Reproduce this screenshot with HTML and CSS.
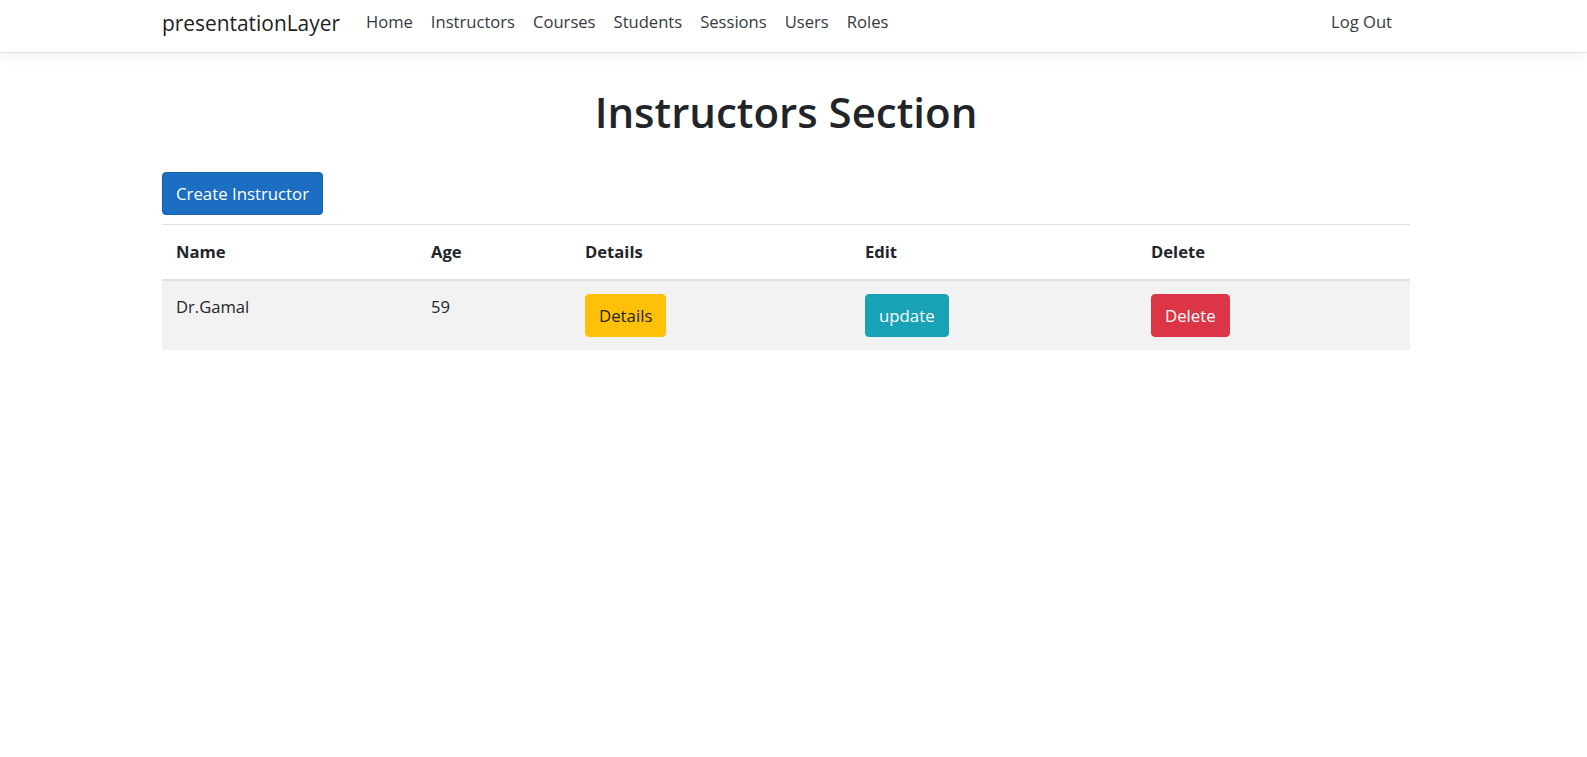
FILE: index.html
```html
<!DOCTYPE html>
<html lang="en">
<head>
<meta charset="utf-8">
<title>Instructors - presentationLayer</title>
<link rel="stylesheet" href="styles.css">
</head>
<body>
<header class="navbar">
  <div class="page">
    <div class="nav-container">
      <a class="brand" href="#">presentationLayer</a>
      <ul class="nav-links">
        <li><a class="nav-link" href="#">Home</a></li>
        <li><a class="nav-link" href="#">Instructors</a></li>
        <li><a class="nav-link" href="#">Courses</a></li>
        <li><a class="nav-link" href="#">Students</a></li>
        <li><a class="nav-link" href="#">Sessions</a></li>
        <li><a class="nav-link" href="#">Users</a></li>
        <li><a class="nav-link" href="#">Roles</a></li>
      </ul>
      <ul class="nav-links nav-right">
        <li><a class="nav-link" href="#">Log Out</a></li>
      </ul>
    </div>
  </div>
</header>
<main class="page">
  <div class="container">
    <h1 class="title">Instructors Section</h1>
    <a class="btn btn-primary" href="#">Create Instructor</a>
    <table class="table">
      <thead>
        <tr>
          <th class="col-name">Name</th>
          <th class="col-age">Age</th>
          <th class="col-details">Details</th>
          <th class="col-edit">Edit</th>
          <th class="col-delete">Delete</th>
        </tr>
      </thead>
      <tbody>
        <tr>
          <td>Dr.Gamal</td>
          <td>59</td>
          <td><a class="btn btn-warning" href="#">Details</a></td>
          <td><a class="btn btn-info" href="#">update</a></td>
          <td><a class="btn btn-danger" href="#">Delete</a></td>
        </tr>
      </tbody>
    </table>
  </div>
</main>
</body>
</html>
```

FILE: styles.css
```css
* { box-sizing: border-box; }

html, body {
  margin: 0;
  padding: 0;
  background: #fff;
}

body {
  font-family: "Open Sans", "Noto Sans", "Liberation Sans", sans-serif;
  font-size: 16.6px;
  line-height: 26.4px;
  color: #212529;
}

a { text-decoration: none; }

.page {
  padding-right: 15px;
}

.navbar {
  height: 53px;
  background: #fff;
  border-bottom: 1px solid #dee2e6;
  box-shadow: 0 4px 13px rgba(0, 0, 0, 0.05);
}

.nav-container {
  width: 1248px;
  margin: 0 auto;
  height: 52px;
  padding-bottom: 7px;
  display: flex;
  align-items: center;
}

.brand {
  font-size: 20.9px;
  color: rgba(0, 0, 0, 0.9);
  margin-right: 17px;
  line-height: 30px;
}

.nav-links {
  list-style: none;
  margin: 0;
  padding: 0;
  display: flex;
}

.nav-link {
  display: block;
  padding: 0 9px;
  color: #343a40;
  font-size: 16.6px;
}

.nav-right {
  margin-left: auto;
  margin-right: 9px;
}

.container {
  width: 1248px;
  margin: 0 auto;
}

.title {
  margin: 0;
  padding-top: 32px;
  height: 119px;
  text-align: center;
  font-size: 42px;
  line-height: 53px;
  font-weight: 600;
}

.btn {
  display: inline-block;
  padding: 7px 13px;
  border: 1px solid transparent;
  border-radius: 4px;
  font-size: 16.8px;
  line-height: 27px;
  vertical-align: top;
}

.btn-primary {
  background: #1b6ec2;
  border-color: #1861ac;
  color: #fff;
}

.btn-warning {
  background: #ffc107;
  border-color: #ffc107;
  color: #212529;
}

.btn-info {
  background: #17a2b8;
  border-color: #17a2b8;
  color: #fff;
}

.btn-danger {
  background: #dc3545;
  border-color: #dc3545;
  color: #fff;
}

.table {
  width: 100%;
  margin-top: 9px;
  border-collapse: collapse;
}

.table th,
.table td {
  text-align: left;
  vertical-align: top;
  padding: 13px 14px;
  border-top: 1px solid #dee2e6;
}

.table th {
  font-weight: 700;
  padding-top: 14px;
  padding-bottom: 14px;
}

.table thead th {
  border-bottom: 2px solid #dee2e6;
}

.table tbody tr {
  background: #f2f2f2;
}

.table tbody td {
  border-top: none;
  padding-top: 13px;
  padding-bottom: 13px;
}

.col-name { width: 255px; }
.col-age { width: 154px; }
.col-details { width: 280px; }
.col-edit { width: 286px; }
.col-delete { width: 273px; }
```
